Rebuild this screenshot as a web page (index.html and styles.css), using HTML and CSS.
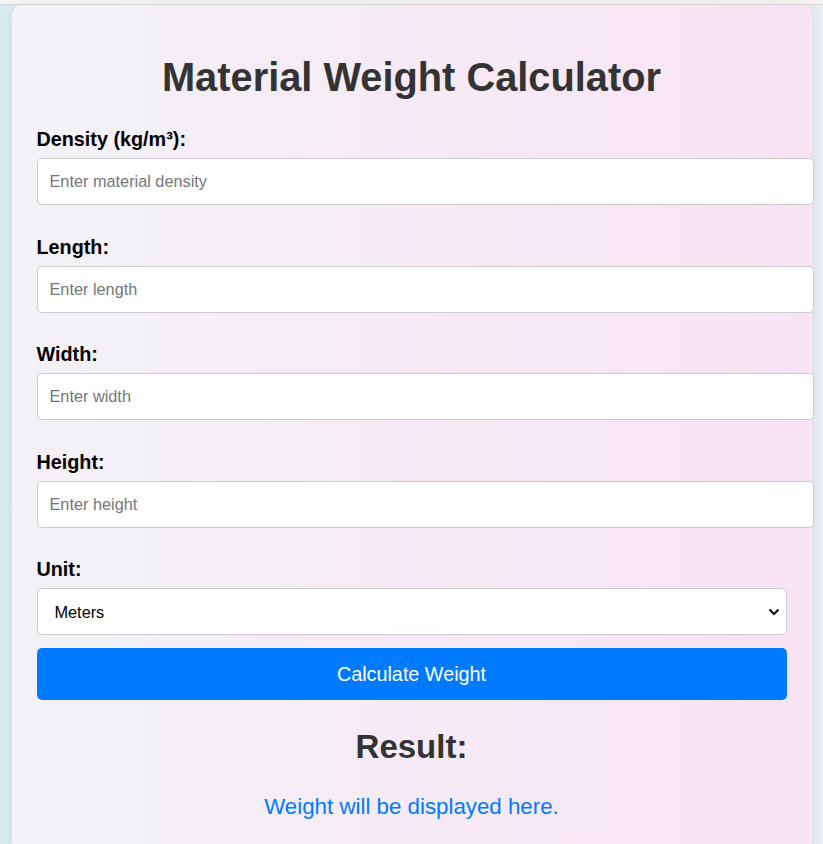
FILE: index.html
```html
<!DOCTYPE html>
<html lang="en">
<head>
<meta charset="UTF-8">
<title>Material Weight Calculator</title>
<link rel="stylesheet" href="styles.css">
</head>
<body>
<div class="topbar"></div>
<main class="container">
  <h1 class="title">Material Weight Calculator</h1>
  <div class="form-group">
    <label class="field-label" for="density">Density (kg/m³):</label>
    <input class="field-input" id="density" type="number" placeholder="Enter material density">
  </div>
  <div class="form-group">
    <label class="field-label" for="length">Length:</label>
    <input class="field-input" id="length" type="number" placeholder="Enter length">
  </div>
  <div class="form-group">
    <label class="field-label" for="width">Width:</label>
    <input class="field-input" id="width" type="number" placeholder="Enter width">
  </div>
  <div class="form-group">
    <label class="field-label" for="height">Height:</label>
    <input class="field-input" id="height" type="number" placeholder="Enter height">
  </div>
  <div class="form-group unit-group">
    <label class="field-label" for="unit">Unit:</label>
    <div class="select-wrap">
      <select class="field-select" id="unit">
        <option>Meters</option>
        <option>Centimeters</option>
        <option>Millimeters</option>
      </select>
      <svg class="select-arrow" width="12" height="8" viewBox="0 0 12 8"><path d="M1.5 1.5 L6 6 L10.5 1.5" fill="none" stroke="#111" stroke-width="2.2"/></svg>
    </div>
  </div>
  <button class="calc-btn" type="button">Calculate Weight</button>
  <h2 class="result-title">Result:</h2>
  <p class="result-text">Weight will be displayed here.</p>
</main>
</body>
</html>
```
FILE: styles.css
```css
html, body {
  margin: 0;
  padding: 0;
}
body {
  font-family: "Liberation Sans", Arial, sans-serif;
  background: linear-gradient(to right, #d8ecef, #e7ebf2);
  min-height: 844px;
}
.topbar {
  height: 4px;
  background: #f4f4f5;
  border-bottom: 1px solid #dcdcdc;
}
.container {
  width: 800px;
  box-sizing: border-box;
  margin: 0 auto;
  padding: 22px 25px 40px;
  border-radius: 10px;
  background: linear-gradient(to right, #f3f2f7, #f8e3f3);
  box-shadow: 0 0 10px rgba(0, 0, 0, 0.08);
}
.title {
  margin: 27px 0 28px;
  font-size: 39.8px;
  line-height: 46px;
  font-weight: bold;
  color: #333;
  text-align: center;
}
.form-group {
  margin-bottom: 30.5px;
}
.field-label {
  display: block;
  font-size: 19.8px;
  line-height: 23px;
  font-weight: bold;
  color: #000;
  margin-bottom: 7px;
}
.field-input {
  display: block;
  width: 100%;
  padding: 12px 13px 12px 12px;
  height: 21px;
  font-family: "Liberation Sans", Arial, sans-serif;
  font-size: 16.3px;
  border: 1px solid #ccc;
  border-radius: 5px;
  background: #fff;
  color: #000;
  outline: none;
  -moz-appearance: textfield;
}
.field-input::placeholder {
  color: #767676;
}
.field-input::-webkit-outer-spin-button,
.field-input::-webkit-inner-spin-button {
  -webkit-appearance: none;
  margin: 0;
}
.unit-group {
  margin-bottom: 13px;
}
.select-wrap {
  position: relative;
}
.field-select {
  display: block;
  width: 100%;
  height: 47px;
  box-sizing: border-box;
  padding: 0 12px 0 17px;
  font-family: "Liberation Sans", Arial, sans-serif;
  font-size: 16.3px;
  color: #000;
  border: 1px solid #ccc;
  border-radius: 5px;
  background: #fff;
  appearance: none;
  -webkit-appearance: none;
  outline: none;
}
.select-arrow {
  position: absolute;
  right: 7px;
  top: 20px;
  pointer-events: none;
}
.calc-btn {
  display: block;
  width: 100%;
  height: 52px;
  padding: 0;
  border: none;
  border-radius: 5px;
  background: #007bff;
  color: #fff;
  font-family: "Liberation Sans", Arial, sans-serif;
  font-size: 19.8px;
  cursor: pointer;
}
.result-title {
  margin: 28px 0 0;
  font-size: 33px;
  line-height: 38px;
  font-weight: bold;
  color: #333;
  text-align: center;
}
.result-text {
  margin: 28px 0 0;
  font-size: 22.3px;
  line-height: 25px;
  color: #007bff;
  text-align: center;
}
```
